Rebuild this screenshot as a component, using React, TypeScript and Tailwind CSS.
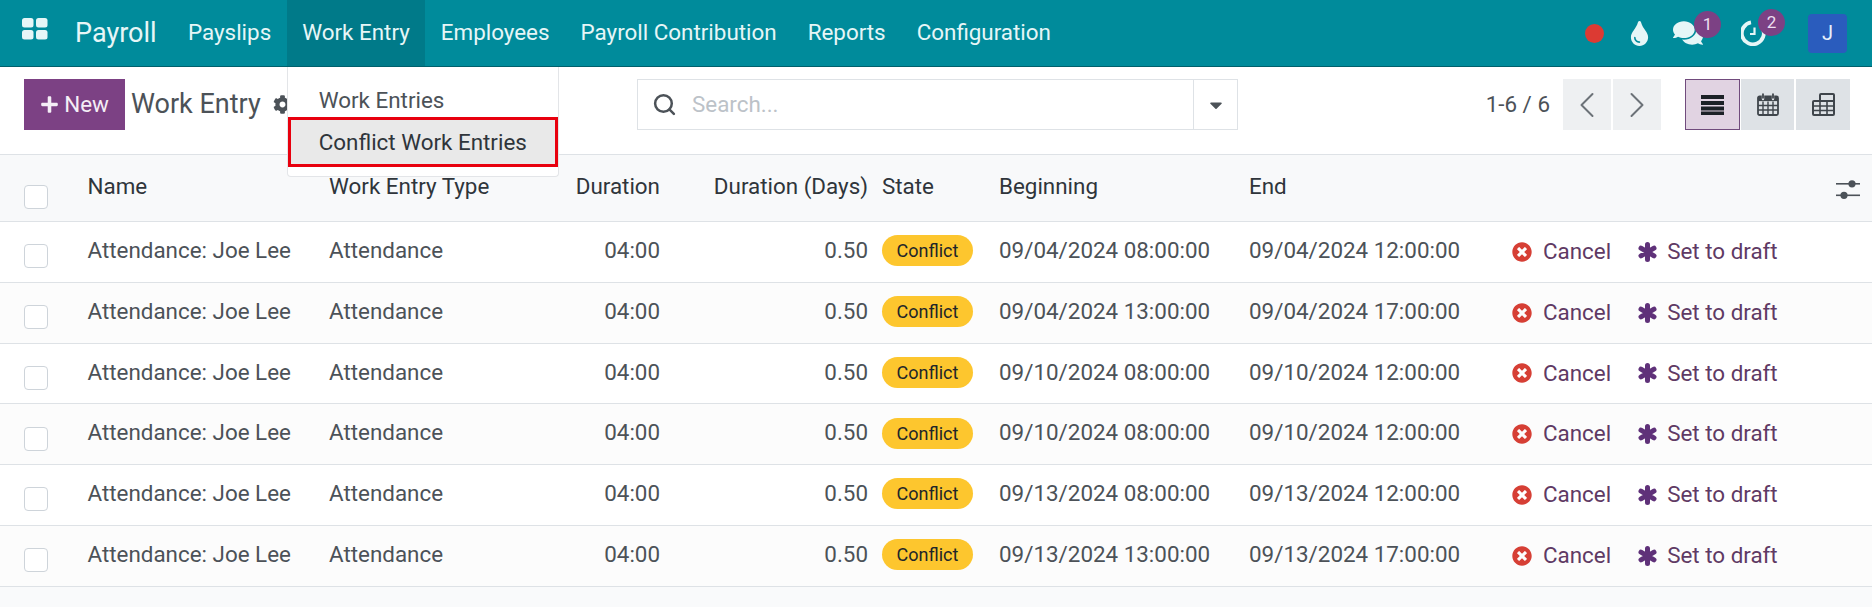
import React from 'react';
import { ChevronLeft, ChevronRight, Search } from 'lucide-react';
import { FaCaretDown, FaCog, FaComments, FaPlus, FaTimesCircle, FaTint } from 'react-icons/fa';

const menuItems = ['Payslips', 'Work Entry', 'Employees', 'Payroll Contribution', 'Reports', 'Configuration'];

const rows = [
  ['09/04/2024 08:00:00', '09/04/2024 12:00:00'],
  ['09/04/2024 13:00:00', '09/04/2024 17:00:00'],
  ['09/10/2024 08:00:00', '09/10/2024 12:00:00'],
  ['09/10/2024 08:00:00', '09/10/2024 12:00:00'],
  ['09/13/2024 08:00:00', '09/13/2024 12:00:00'],
  ['09/13/2024 13:00:00', '09/13/2024 17:00:00'],
];

const gridCols = 'grid grid-cols-[87.5px_241.5px_211px_120px_208px_131px_250px_263px_1fr] items-center';

const AppsIcon = () => (
  <svg width="26" height="22" viewBox="0 0 26 22" fill="#e6f6f7">
    <rect x="0" y="0" width="11.5" height="9.5" rx="2.5" />
    <rect x="14" y="0" width="11.5" height="9.5" rx="2.5" />
    <rect x="0" y="12" width="11.5" height="9.5" rx="2.5" />
    <rect x="14" y="12" width="11.5" height="9.5" rx="2.5" />
  </svg>
);

const ClockIcon = () => (
  <svg width="26" height="26" viewBox="0 0 26 26" fill="none" stroke="#e6f6f7">
    <path d="M21.5 8 A11 11 0 1 1 10 2.4" strokeWidth="3.8" />
    <path d="M13.5 7.5v6.5h-4.5" strokeWidth="2.2" />
  </svg>
);

const AsteriskIcon = () => (
  <svg width="19" height="20" viewBox="0 0 19 20" stroke="#5f3179" strokeWidth="5" strokeLinecap="round" className="ml-[27px] shrink-0">
    <path d="M9.5 2.5v15M3 6.2l13 7.6M16 6.2L3 13.8" />
  </svg>
);

const ListIcon = () => (
  <svg width="24" height="20" viewBox="0 0 24 20" fill="#1c2127">
    <rect x="0" y="0" width="23" height="4" />
    <rect x="0" y="6" width="23" height="4" />
    <rect x="0" y="11.5" width="23" height="4" />
    <rect x="0" y="16.5" width="23" height="3.5" />
  </svg>
);

const CalendarIcon = () => (
  <svg width="22" height="23" viewBox="0 0 22 23" fill="none" stroke="#3f454b" strokeWidth="1.8">
    <rect x="1" y="3.5" width="20" height="18.5" rx="1.5" />
    <path d="M1 12.5h20M1 17h20M6 8.5V22M11 8.5V22M16 8.5V22" strokeWidth="1.4" />
    <path d="M1 5.8h20" strokeWidth="4.6" />
    <path d="M6 1v5M16 1v5" strokeWidth="2.4" strokeLinecap="round" stroke="#dee2e6" />
    <path d="M6 1.2v3.6M16 1.2v3.6" strokeWidth="1.8" strokeLinecap="round" />
  </svg>
);

const PivotIcon = () => (
  <svg width="23" height="23" viewBox="0 0 23 23" fill="none" stroke="#3f454b" strokeWidth="2">
    <path d="M8 8V2a1 1 0 0 1 1-1h12a1 1 0 0 1 1 1v19a1 1 0 0 1-1 1H2a1 1 0 0 1-1-1V9a1 1 0 0 1 1-1h20" />
    <path d="M1 13h21M1 17.5h21M8 8v14M15 8v14" strokeWidth="1.6" />
  </svg>
);

const SlidersIcon = () => (
  <svg width="24" height="25" viewBox="0 0 24 25" fill="#4c5258">
    <rect x="0" y="5" width="24" height="1.6" />
    <rect x="0" y="16.5" width="24" height="1.6" />
    <circle cx="16" cy="5.8" r="3.6" />
    <circle cx="8" cy="17.3" r="3.6" />
  </svg>
);

const Badge = ({ children, className }: { children: React.ReactNode; className: string }) => (
  <span className={`absolute flex h-[27px] w-[27px] items-center justify-center rounded-full bg-[#7c4184] text-[17px] text-[#ecdff0] ${className}`}>
    {children}
  </span>
);

const App = () => {
  return (
    <div className="flex h-[607px] flex-col overflow-hidden bg-[#f9fafb] font-['Roboto',sans-serif] text-[22.4px] text-[#4c5258]">
      {/* Navbar */}
      <nav className="flex h-[67px] shrink-0 items-stretch border-b border-[#00606c] bg-[#008b9b] text-[#e6f6f7]">
        <div className="flex w-[75px] items-center pl-[22px] pb-[8px]">
          <AppsIcon />
        </div>
        <div className="flex w-[97.5px] items-center text-[27px]">Payroll</div>
        {menuItems.map((item) => (
          <div
            key={item}
            className={`relative flex items-center px-[15.5px] ${item === 'Work Entry' ? 'bg-[#007a89]' : ''}`}
          >
            {item}
            {item === 'Work Entry' && (
              <div className="absolute left-0 top-[67px] z-10 flex h-[110px] w-[272px] flex-col rounded-b-[4px] border border-t-0 border-[#e3e5e8] bg-white pt-[16px] text-[#4c5258]">
                <div className="flex h-[34px] items-center pl-[31px] pt-[2px]">Work Entries</div>
                <div className="flex h-[50px] items-center border-[3px] border-[#e8000e] bg-[#e9e9e9] pl-[28px] pt-[2px] text-[#2f353b]">
                  Conflict Work Entries
                </div>
              </div>
            )}
          </div>
        ))}
        <div className="ml-auto flex items-center pr-[25px]">
          <span className="mr-[23px] h-[19px] w-[19px] rounded-full bg-[#dc3a33]" />
          <FaTint className="mr-[21px] text-[25px]" />
          <span className="relative mr-[38px] flex">
            <FaComments className="text-[30px]" />
            <Badge className="left-[21px] top-[-7px]">1</Badge>
          </span>
          <span className="relative mr-[41px] flex">
            <ClockIcon />
            <Badge className="left-[17px] top-[-11px]">2</Badge>
          </span>
          <span className="flex h-[39px] w-[39px] items-center justify-center rounded-[4px] bg-[#2a5cbd] text-[20px] text-[#e6f0fa]">
            J
          </span>
        </div>
      </nav>

      {/* Control panel */}
      <div className="flex h-[88px] shrink-0 items-start border-b border-[#dee2e6] bg-white pt-[12px]">
        <button className="ml-6 flex h-[51px] w-[101px] items-center justify-center gap-[5px] bg-[#7c4184] text-[#f4eef6]">
          <FaPlus className="text-[19px]" />
          New
        </button>
        <span className="ml-[6px] flex h-[51px] w-[156px] items-center whitespace-nowrap text-[27px]">
          Work Entry
          <FaCog className="ml-[12px] shrink-0 text-[19px]" />
        </span>
        <div className="ml-[350px] flex h-[51px] w-[601px] items-center border border-[#dee2e6]">
          <Search className="ml-[14px] h-[25px] w-[25px]" strokeWidth={2.4} />
          <span className="ml-[15px] flex-1 text-[#bcc2c8]">Search...</span>
          <span className="flex h-full w-[44px] items-center justify-center border-l border-[#dee2e6]">
            <FaCaretDown className="text-[20px]" />
          </span>
        </div>
        <span className="ml-auto flex h-[51px] items-center">1-6 / 6</span>
        <button className="ml-[13px] flex h-[51px] w-[48px] items-center justify-center bg-[#eef0f2]">
          <ChevronLeft className="h-[44px] w-[44px] text-[#6c7278]" strokeWidth={1.1} />
        </button>
        <button className="ml-[2px] flex h-[51px] w-[48px] items-center justify-center bg-[#eef0f2]">
          <ChevronRight className="h-[44px] w-[44px] text-[#6c7278]" strokeWidth={1.1} />
        </button>
        <button className="ml-[24px] flex h-[51px] w-[55px] items-center justify-center border border-[#714b7d] bg-[#e1d3e2]">
          <ListIcon />
        </button>
        <button className="ml-px flex h-[51px] w-[53px] items-center justify-center bg-[#dee2e6]">
          <CalendarIcon />
        </button>
        <button className="ml-[2px] mr-[22px] flex h-[51px] w-[54px] items-center justify-center bg-[#dee2e6]">
          <PivotIcon />
        </button>
      </div>

      {/* Table header */}
      <div className={`${gridCols} h-[67px] shrink-0 border-b border-[#dee2e6] bg-[#f8f9fa] pb-[3px] text-[#2f353b]`}>
        <span className="pl-6 pt-[20px]">
          <span className="block h-[24px] w-[24px] rounded-[4px] border border-[#ced4da] bg-white" />
        </span>
        <span>Name</span>
        <span className="whitespace-nowrap">Work Entry Type</span>
        <span className="text-right">Duration</span>
        <span className="text-right">Duration (Days)</span>
        <span className="pl-[14px]">State</span>
        <span>Beginning</span>
        <span>End</span>
        <span className="flex justify-end pr-3 pt-[7px]">
          <SlidersIcon />
        </span>
      </div>

      {/* Rows */}
      {rows.map(([begin, end], i) => (
        <div
          key={i}
          className={`${gridCols} h-[60.75px] shrink-0 border-b border-[#dee2e6] pb-[2px] ${i % 2 === 1 ? 'bg-[#fcfcfc]' : 'bg-white'}`}
        >
          <span className="pl-6 pt-[11px]">
            <span className="block h-[24px] w-[24px] rounded-[4px] border border-[#ced4da] bg-white" />
          </span>
          <span className="whitespace-nowrap">Attendance: Joe Lee</span>
          <span>Attendance</span>
          <span className="text-right">04:00</span>
          <span className="text-right">0.50</span>
          <span className="pl-[14px]">
            <span className="flex h-[31px] w-[91px] items-center justify-center rounded-full bg-[#fdc62e] text-[18px] text-[#212529]">
              Conflict
            </span>
          </span>
          <span>{begin}</span>
          <span>{end}</span>
          <span className="flex items-center pt-[2px] text-[#5f3a64]">
            <FaTimesCircle className="shrink-0 text-[20px] text-[#d63f35]" />
            <span className="ml-[11px]">Cancel</span>
            <AsteriskIcon />
            <span className="ml-[10px] whitespace-nowrap">Set to draft</span>
          </span>
        </div>
      ))}
    </div>
  );
};

export default App;
